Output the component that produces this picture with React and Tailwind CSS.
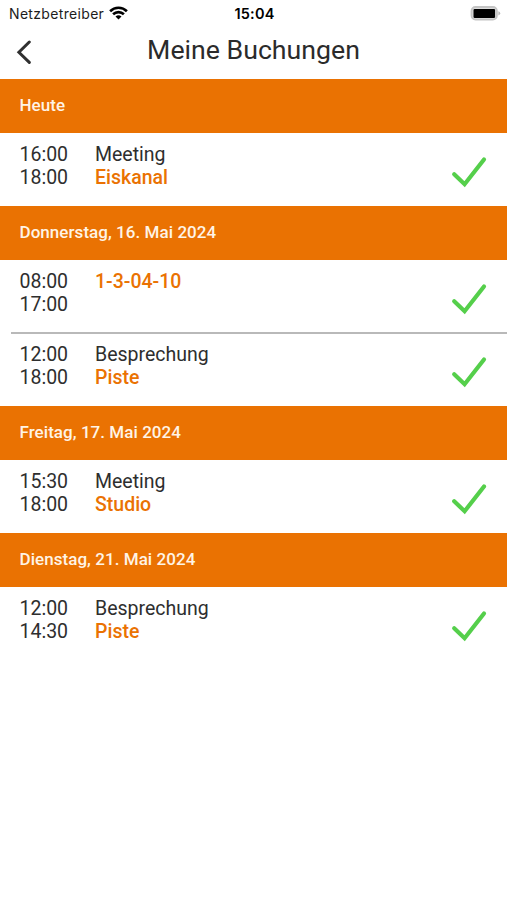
const days = [
  { title: 'Heute', bookings: [{ from: '16:00', to: '18:00', subject: 'Meeting', room: 'Eiskanal' }] },
  {
    title: 'Donnerstag, 16. Mai 2024',
    bookings: [
      { from: '08:00', to: '17:00', room: '1-3-04-10' },
      { from: '12:00', to: '18:00', subject: 'Besprechung', room: 'Piste' },
    ],
  },
  { title: 'Freitag, 17. Mai 2024', bookings: [{ from: '15:30', to: '18:00', subject: 'Meeting', room: 'Studio' }] },
  { title: 'Dienstag, 21. Mai 2024', bookings: [{ from: '12:00', to: '14:30', subject: 'Besprechung', room: 'Piste' }] },
];

function StatusBar() {
  return (
    <div className="grid h-7 grid-cols-[1fr_60px_1fr] items-center pl-[9px] pr-[7px] font-['Inter',sans-serif] text-[14px] text-[#1c1c1c]">
      <div className="flex items-center gap-[5px]">
        <span className="pb-[2px] tracking-[0.33px]">Netzbetreiber</span>
        <svg className="-mt-[2px] h-[14px] w-[19px]" viewBox="0 0 19 14" fill="none" stroke="#000" strokeWidth="2.6">
          <path d="M1.1 5.2A12 12 0 0 1 17.9 5.2" />
          <path d="M4.1 8.3A7.7 7.7 0 0 1 14.9 8.3" />
          <path d="M9.5 13.6L6.5 10.6A4.3 4.3 0 0 1 12.5 10.6Z" fill="#000" stroke="none" />
        </svg>
      </div>
      <span className="text-center text-[14.5px] font-semibold tracking-[0.2px] text-black">15:04</span>
      <svg className="-mt-[2px] mr-[-1px] h-[16px] w-[32px] justify-self-end" viewBox="0 0 32 16">
        <rect x="2.5" y="2" width="25.4" height="12.6" rx="4" fill="#dedede" stroke="#c4c4c4" strokeWidth="1.8" />
        <rect x="4.5" y="3.9" width="21.6" height="9" rx="1.2" fill="#000" />
        <path d="M29.4 6.2Q31.2 6.7 31.2 8.3T29.4 10.4Z" fill="#b8b8b8" />
      </svg>
    </div>
  );
}

function Booking({ from, to, subject, room }) {
  return (
    <div className="flex h-[73.3px] pl-[19.5px] pr-[20px] pt-[10px] text-[19.5px] leading-[23.2px] text-[#2e2e2e]">
      <div className="w-[75.5px]">
        <div>{from}</div>
        <div>{to}</div>
      </div>
      <div className="flex-1">
        {subject && <div>{subject}</div>}
        <div className="font-medium text-[#ea7202]">{room}</div>
      </div>
      <svg className="mt-[13.4px] h-[32px] w-[36px]" viewBox="0 0 36 32" fill="none" stroke="#55cf4b" strokeWidth="4.2" strokeLinecap="round">
        <path d="M3.2 18.2L13.6 28.2L33 3.5" />
      </svg>
    </div>
  );
}

export default function App() {
  return (
    <main className="h-[900px] w-full overflow-hidden bg-white font-['Roboto',sans-serif]">
      <StatusBar />
      <header className="grid h-[51px] grid-cols-[60px_1fr_60px] items-center text-[#2b2b2b]">
        <svg className="ml-[16px] mt-[-3px] h-[24px] w-[16px]" viewBox="0 0 16 24" fill="none" stroke="#303030" strokeWidth="3" strokeLinecap="round">
          <path d="M13.3 2L2.9 12.3L13.3 22.4" />
        </svg>
        <h1 className="pb-[7px] text-center text-[26.7px] leading-[32px]">Meine Buchungen</h1>
      </header>
      {days.map((day) => (
        <section key={day.title}>
          <h2 className="flex h-[53.7px] items-center bg-[#ea7202] pb-[0.4px] pl-[19.5px] text-[17px] font-medium tracking-[0.05px] text-[#fff4e6]">{day.title}</h2>
          {day.bookings.map((booking, i) => (
            <div key={i}>
              {i > 0 && <div className="-mt-px -mb-px ml-[11px] h-[2px] bg-[#b9b9b9]" />}
              <Booking {...booking} />
            </div>
          ))}
        </section>
      ))}
    </main>
  );
}
